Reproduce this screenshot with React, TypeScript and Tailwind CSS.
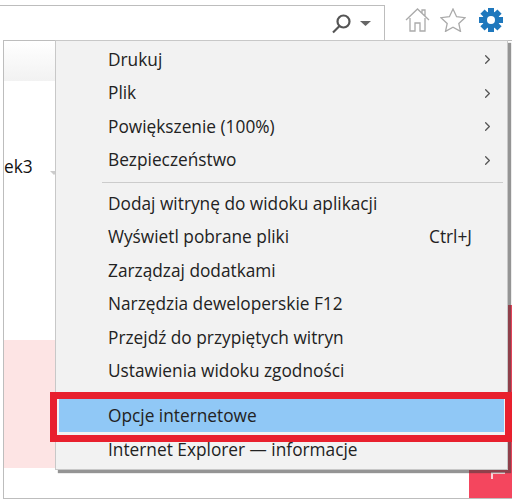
import { ChevronRight } from "lucide-react";

type MenuItem = {
  label: string;
  shortcut?: string;
  arrow?: boolean;
};

const topItems: MenuItem[] = [
  { label: "Drukuj", arrow: true },
  { label: "Plik", arrow: true },
  { label: "Powiększenie (100%)", arrow: true },
  { label: "Bezpieczeństwo", arrow: true },
];

const middleItems: MenuItem[] = [
  { label: "Dodaj witrynę do widoku aplikacji" },
  { label: "Wyświetl pobrane pliki", shortcut: "Ctrl+J" },
  { label: "Zarządzaj dodatkami" },
  { label: "Narzędzia deweloperskie F12" },
  { label: "Przejdź do przypiętych witryn" },
  { label: "Ustawienia widoku zgodności" },
];

const Row = ({ item }: { item: MenuItem }) => (
  <div className="flex h-[33.5px] items-center justify-between pl-[52px] pr-[12px] text-[#222]">
    <span>{item.label}</span>
    {item.shortcut && <span className="pr-[23px]">{item.shortcut}</span>}
    {item.arrow && <ChevronRight size={15} strokeWidth={2} className="text-[#555]" />}
  </div>
);

const Gear = () => (
  <svg width="26" height="26" viewBox="0 0 26 26" className="ml-[12px]" fill="#1f78bd">
    <rect x="10" y="1" width="6" height="24" />
    <rect x="1" y="10" width="24" height="6" />
    <rect x="10" y="1" width="6" height="24" transform="rotate(45 13 13)" />
    <rect x="10" y="1" width="6" height="24" transform="rotate(-45 13 13)" />
    <circle cx="13" cy="13" r="8.500" />
    <circle cx="13" cy="13" r="4" fill="#fff" />
  </svg>
);

const Toolbar = () => (
  <div className="flex h-[40px] items-end justify-end pr-[14px]">
    <div className="flex h-[35px] flex-1 items-center justify-end border-r border-t border-[#bdbdbd] pr-[13px] pt-[1px]">
      <svg width="20" height="20" viewBox="0 0 20 20" fill="none" stroke="#555" strokeWidth="2.2">
        <circle cx="12.500" cy="7.500" r="6" />
        <path d="M8.500 12 2 18.500" />
      </svg>
      <svg width="11" height="5" viewBox="0 0 11 5" className="ml-[9px]" fill="#666">
        <path d="M0 0h11L5.500 5z" />
      </svg>
    </div>
    <div className="mb-[7px] ml-[20px] flex items-center">
      <svg width="25" height="24" viewBox="0 0 25 24" fill="none" stroke="#aaa" strokeWidth="1.300">
        <path d="M1 12 12.500 1 24 12M5 10v13h5v-8h5v8h5V10M17 5V2h3v6" />
      </svg>
      <svg width="26" height="24" viewBox="0 0 26 24" className="ml-[10px]" fill="none" stroke="#aaa" strokeWidth="1.300">
        <path d="m13 1 3.600 7.700 8.400 1-6.200 5.700 1.700 8-7.500-4.200-7.500 4.200 1.700-8L1 9.700l8.400-1z" />
      </svg>
      <Gear />
    </div>
  </div>
);

export default function App() {
  return (
    <div className="relative h-[503px] w-[518px] overflow-hidden bg-white font-['Open_Sans','Noto_Sans',sans-serif] text-[17.3px]">
      <Toolbar />

      {/* page behind the menu */}
      <div className="ml-[3px] flex h-[459px] w-[509px] border-b border-l border-t border-[#bdbdbd]">
        <div className="flex flex-1 flex-col pb-[30px]">
          <div className="h-[40px] bg-gradient-to-b from-white to-[#f2f2f2]" />
          <div className="mt-[73px] flex items-start">
            <span className="font-medium text-[#111]">ek3</span>
            <div className="ml-[17px] mt-[17px] h-0 w-0 border-x-[4px] border-t-[4px] border-x-transparent border-t-[#ccc]" />
          </div>
          <div className="mt-auto h-[128px] bg-[#fde4e4]" />
        </div>
        <div className="mt-auto flex h-[193px] w-[43px] flex-col items-end justify-end bg-[#f4465e] pb-[19px] pr-[7px]">
          <div className="h-[7px] w-[14px] border-l-2 border-t-2 border-[#fbd3d8]" />
        </div>
      </div>

      {/* dropdown */}
      <div className="absolute left-[55px] top-[40px] h-[430px] w-[453px] border border-[#c8c8c8] bg-[#f2f2f2] pt-[2px] shadow-[3px_3px_1px_rgba(60,60,60,0.55)]">
        {topItems.map((item) => (
          <Row key={item.label} item={item} />
        ))}
        <div className="mb-[4px] ml-[46px] mr-[4px] mt-[5px] h-px bg-[#ccc]" />
        {middleItems.map((item) => (
          <Row key={item.label} item={item} />
        ))}
        {/* red callout drawn over the highlighted row */}
        <div className="relative z-10 ml-[-6px] mr-[-5px] mt-[4px] h-[50px] border-[7px] border-[#e8202e] bg-[#f2f2f2]">
          <div className="ml-[2px] mr-[1px] flex h-[33px] items-center bg-[#90c8f6] pl-[49px] text-[#222]">Opcje internetowe</div>
        </div>
        <div className="mt-[-6px] flex h-[27px] items-center pl-[52px] text-[#222]">
          Internet Explorer — informacje
        </div>
      </div>
    </div>
  );
}
